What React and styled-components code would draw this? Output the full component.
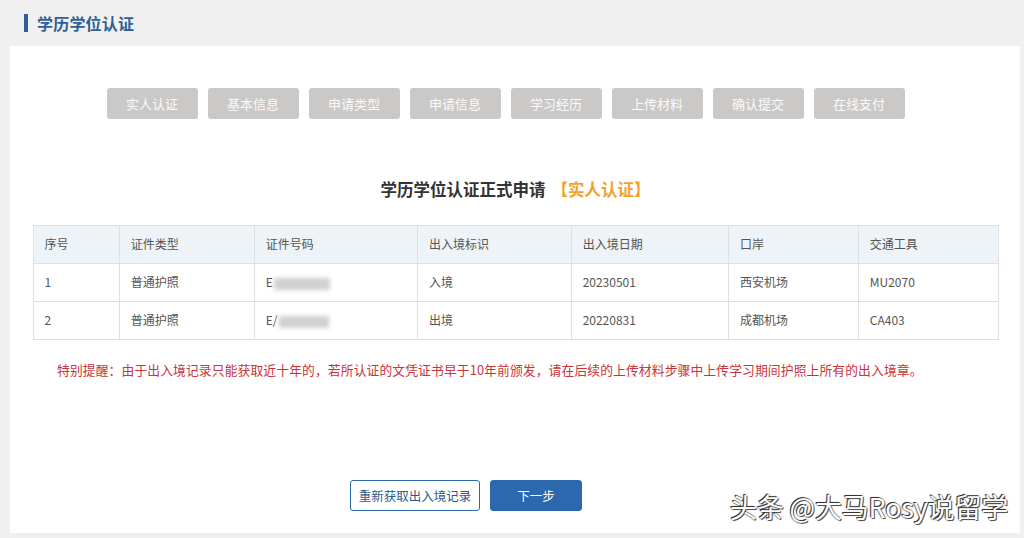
import React from "react";
import styled, { createGlobalStyle } from "styled-components";

const GlobalStyle = createGlobalStyle`
  html, body {
    margin: 0;
    padding: 0;
    background: #f0f0f0;
    font-family: "Noto Sans CJK SC", "Liberation Sans", sans-serif;
  }
`;

const Page = styled.div`
  position: relative;
  width: 1024px;
  height: 538px;
  background: #f0f0f0;
  overflow: hidden;
  padding: 0 4px 5px 10px;
  box-sizing: border-box;
  display: flex;
  flex-direction: column;
`;

const Header = styled.div`
  height: 46px;
  display: flex;
  align-items: center;
  padding-left: 14px;
  gap: 9px;
  h1 {
    margin: 0;
    font-size: 16px;
    font-weight: 700;
    color: #2f5f96;
    letter-spacing: 0.2px;
  }
`;

const Bar = styled.span`
  width: 4px;
  height: 18px;
  background: #2f5f96;
`;

const Panel = styled.main`
  flex: 1;
  background: #fff;
  display: flex;
  flex-direction: column;
  align-items: center;
  padding: 42px 22px 0 23px;
`;

const Steps = styled.div`
  display: flex;
  gap: 10px;
  margin-left: -20px;
`;

const Step = styled.div`
  width: 91px;
  height: 31px;
  border-radius: 3px;
  background: #cbc8c8;
  color: #fafafa;
  font-size: 13px;
  display: flex;
  align-items: center;
  justify-content: center;
`;

const Title = styled.h2`
  margin: 56px 0 0;
  font-size: 16.5px;
  font-weight: 700;
  color: #333;
  height: 28px;
  line-height: 28px;
  span {
    color: #f2a12e;
    margin-left: 6px;
  }
`;

const Table = styled.table`
  margin-top: 22px;
  width: 966px;
  border-collapse: collapse;
  font-size: 12px;
  color: #555;
  th, td {
    border: 1px solid #dcdfe3;
    height: 35px;
    padding: 0 0 2px 11px;
    text-align: left;
    font-weight: 400;
  }
  th {
    background: #eef3f8;
  }
`;

const Blur = styled.span`
  display: inline-block;
  width: ${(p) => p.w}px;
  height: 12px;
  vertical-align: middle;
  margin-left: 1px;
  background: #d0d0d0;
  filter: blur(2px);
`;

const Note = styled.p`
  align-self: flex-start;
  margin: 20px 0 0 24px;
  font-size: 12.8px;
  color: #c8343a;
  letter-spacing: 0.1px;
`;

const Actions = styled.div`
  margin-top: auto;
  margin-bottom: 22px;
  display: flex;
  gap: 10px;
  margin-left: -99px;
`;

const Button = styled.button`
  height: 31px;
  padding: 0;
  width: ${(p) => (p.primary ? 92 : 130)}px;
  border-radius: 3px;
  font-family: inherit;
  font-size: 12.5px;
  border: 1px solid #2c68ad;
  background: ${(p) => (p.primary ? "#2c68ad" : "#fff")};
  color: ${(p) => (p.primary ? "#fff" : "#2d5a8c")};
`;

const Watermark = styled.div`
  position: absolute;
  right: 16px;
  bottom: 12px;
  font-size: 27px;
  color: #fff;
  text-shadow: -1px -1px 0 #333, 1px 1px 0 #555, 0 0 2px #222;
  letter-spacing: -0.2px;
`;

const steps = ["实人认证", "基本信息", "申请类型", "申请信息", "学习经历", "上传材料", "确认提交", "在线支付"];
const cols = [
  ["序号", 82],
  ["证件类型", 137],
  ["证件号码", 163],
  ["出入境标识", 158],
  ["出入境日期", 157],
  ["口岸", 131],
  ["交通工具", 138],
];
const rows = [
  ["1", "普通护照", ["E", 56], "入境", "20230501", "西安机场", "MU2070"],
  ["2", "普通护照", ["E/", 50], "出境", "20220831", "成都机场", "CA403"],
];

export default function App() {
  return (
    <>
      <GlobalStyle />
      <Page>
        <Header>
          <Bar />
          <h1>学历学位认证</h1>
        </Header>
        <Panel>
          <Steps>
            {steps.map((s) => (
              <Step key={s}>{s}</Step>
            ))}
          </Steps>
          <Title>
            学历学位认证正式申请<span>【实人认证】</span>
          </Title>
          <Table>
            <thead>
              <tr>
                {cols.map(([c, w]) => (
                  <th key={c} style={{ width: w }}>
                    {c}
                  </th>
                ))}
              </tr>
            </thead>
            <tbody>
              {rows.map((r) => (
                <tr key={r[0]}>
                  {r.map((c, i) => (
                    <td key={i}>
                      {Array.isArray(c) ? (
                        <>
                          {c[0]}
                          <Blur w={c[1]} />
                        </>
                      ) : (
                        c
                      )}
                    </td>
                  ))}
                </tr>
              ))}
            </tbody>
          </Table>
          <Note>
            特别提醒：由于出入境记录只能获取近十年的，若所认证的文凭证书早于10年前颁发，请在后续的上传材料步骤中上传学习期间护照上所有的出入境章。
          </Note>
          <Actions>
            <Button>重新获取出入境记录</Button>
            <Button primary>下一步</Button>
          </Actions>
        </Panel>
        <Watermark>头条 @大马Rosy说留学</Watermark>
      </Page>
    </>
  );
}
